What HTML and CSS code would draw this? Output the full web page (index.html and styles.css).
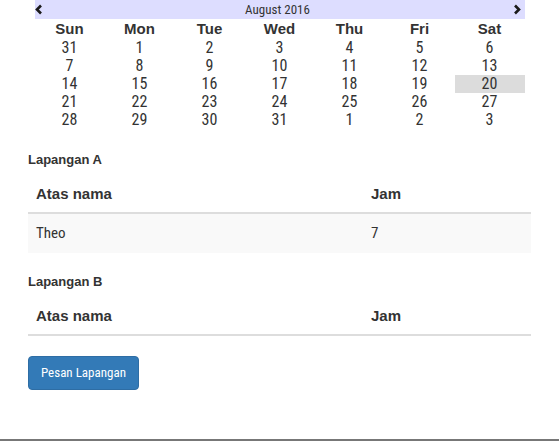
FILE: index.html
```html
<!DOCTYPE html>
<html>
<head>
<meta charset="utf-8">
<link rel="stylesheet" href="styles.css">
</head>
<body>
<div class="page">
  <div class="calendar">
    <div class="cal-head">
      <span class="nav nav-prev"><svg width="8" height="11" viewBox="0 0 8 11"><polyline points="6,1.5 2,5.5 6,9.5" fill="none" stroke="#1a1a1a" stroke-width="2.6"/></svg></span>
      <span class="cal-title">August 2016</span>
      <span class="nav nav-next"><svg width="8" height="11" viewBox="0 0 8 11"><polyline points="2,1.5 6,5.5 2,9.5" fill="none" stroke="#1a1a1a" stroke-width="2.6"/></svg></span>
    </div>
    <table class="cal-grid">
      <thead>
        <tr><th>Sun</th><th>Mon</th><th>Tue</th><th>Wed</th><th>Thu</th><th>Fri</th><th>Sat</th></tr>
      </thead>
      <tbody>
        <tr><td>31</td><td>1</td><td>2</td><td>3</td><td>4</td><td>5</td><td>6</td></tr>
        <tr><td>7</td><td>8</td><td>9</td><td>10</td><td>11</td><td>12</td><td>13</td></tr>
        <tr><td>14</td><td>15</td><td>16</td><td>17</td><td>18</td><td>19</td><td class="today">20</td></tr>
        <tr><td>21</td><td>22</td><td>23</td><td>24</td><td>25</td><td>26</td><td>27</td></tr>
        <tr><td>28</td><td>29</td><td>30</td><td>31</td><td>1</td><td>2</td><td>3</td></tr>
      </tbody>
    </table>
  </div>

  <div class="container">
    <div class="court-label">Lapangan A</div>
    <table class="table table-striped">
      <thead>
        <tr><th class="col-name">Atas nama</th><th>Jam</th></tr>
      </thead>
      <tbody>
        <tr><td>Theo</td><td>7</td></tr>
      </tbody>
    </table>

    <div class="court-label">Lapangan B</div>
    <table class="table table-striped">
      <thead>
        <tr><th class="col-name">Atas nama</th><th>Jam</th></tr>
      </thead>
      <tbody></tbody>
    </table>

    <button class="btn btn-primary" type="button">Pesan Lapangan</button>
  </div>
</div>
</body>
</html>
```

FILE: styles.css
```css
html, body {
  margin: 0;
  padding: 0;
  background: #fff;
}

body {
  font-family: "Roboto Condensed", "Liberation Sans", Arial, sans-serif;
  font-size: 14px;
  color: #333;
}

.page {
  min-height: 441px;
  box-sizing: border-box;
  border-bottom: 2px solid #777;
}

.calendar {
  width: 490px;
  margin: 0 auto;
}

.cal-head {
  height: 19px;
  background: #ddddff;
  display: flex;
  align-items: center;
  justify-content: space-between;
  padding: 0 4px 0 0;
}

.nav {
  display: flex;
  width: 8px;
  height: 11px;
}

.cal-title {
  font-size: 13px;
  color: #333;
  line-height: 19px;
}

.cal-grid {
  width: 490px;
  border-collapse: collapse;
  table-layout: fixed;
}

.cal-grid th,
.cal-grid td {
  padding: 0;
  text-align: center;
}

.cal-grid th {
  font-family: "Liberation Sans", Arial, sans-serif;
  font-weight: bold;
  font-size: 15px;
  height: 20px;
  line-height: 20px;
  color: #333;
}

.cal-grid td {
  font-size: 16px;
  height: 18px;
  line-height: 18px;
  color: #333;
}

.cal-grid td.today {
  background: #dcdcdc;
}

.container {
  width: 503px;
  margin: 0 auto;
  padding-top: 22px;
}

.court-label {
  font-family: "Liberation Sans", Arial, sans-serif;
  font-weight: bold;
  font-size: 13px;
  line-height: 18px;
  margin-bottom: 6px;
}

.table {
  width: 100%;
  border-collapse: collapse;
  margin-bottom: 20px;
}

.table th,
.table td {
  padding: 8px;
  text-align: left;
  vertical-align: bottom;
}

.table th {
  font-family: "Liberation Sans", Arial, sans-serif;
  font-weight: bold;
  font-size: 15px;
  line-height: 21px;
  border-bottom: 2px solid #ddd;
}

.table th.col-name {
  width: 66.6%;
}

.table td {
  font-size: 15px;
  line-height: 23px;
  vertical-align: middle;
}

.table-striped tbody tr:nth-child(odd) {
  background: #f9f9f9;
}

.btn {
  display: inline-block;
  font-family: "Roboto Condensed", "Liberation Sans", Arial, sans-serif;
  font-size: 13px;
  line-height: 20px;
  padding: 6px 12px;
  border: 1px solid #2e6da4;
  border-radius: 4px;
  background: #337ab7;
  color: #fff;
  cursor: pointer;
}
```
